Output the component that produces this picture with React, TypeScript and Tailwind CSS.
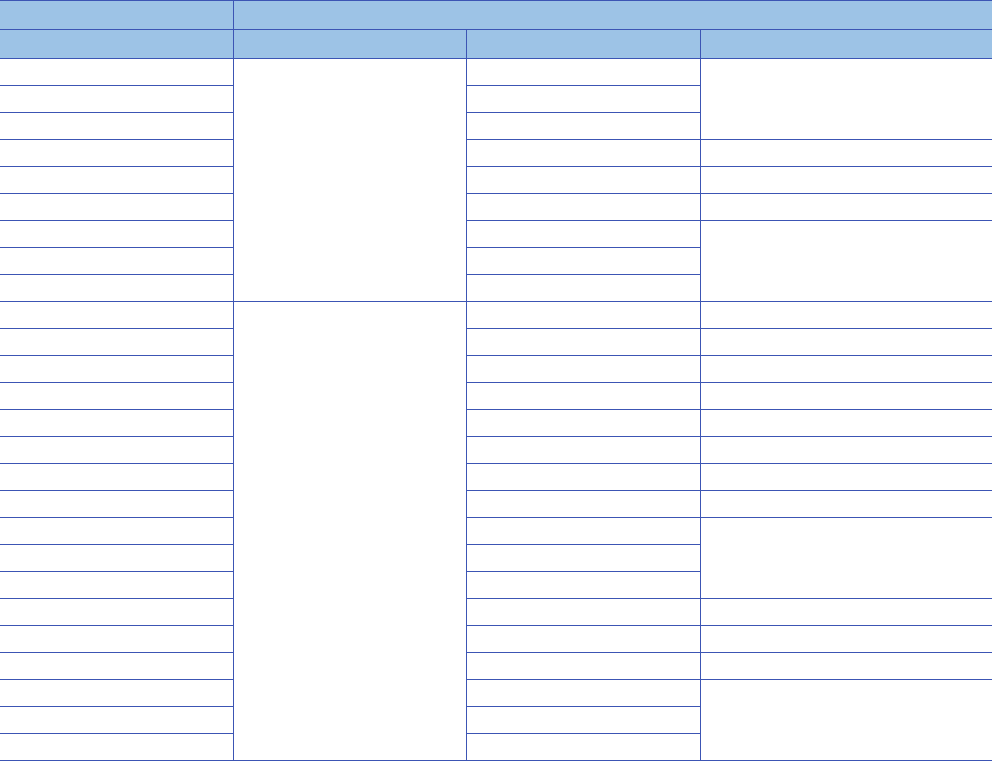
const HEADER_BG = 'bg-[#9dc3e6]';

// row spans in the body: 26 rows of 26px with 1px rule between
const spanHeight: Record<number, string> = {
  1: 'h-[26px]',
  3: 'h-[80px]',
  9: 'h-[242px]',
  17: 'h-[458px]',
};

const ones = (n: number) => Array.from({ length: n }, () => 1);

const columns: { width: string; spans: number[] }[] = [
  { width: 'w-[233px]', spans: ones(26) },
  { width: 'w-[232px]', spans: [9, 17] },
  { width: 'w-[233px]', spans: ones(26) },
  { width: 'flex-1', spans: [3, 1, 1, 1, 3, ...ones(8), 3, 1, 1, 1, 3] },
];

export default function App() {
  return (
    <div className="w-[992px] h-[761px] bg-white">
      <div className="flex flex-col gap-px bg-[#3c55b4] py-px">
        <div className="flex h-[28px] gap-px">
          <div className={`w-[233px] ${HEADER_BG}`} />
          <div className={`flex-1 ${HEADER_BG}`} />
        </div>
        <div className="flex h-[28px] gap-px">
          {columns.map((col, i) => (
            <div key={i} className={`${col.width} ${HEADER_BG}`} />
          ))}
        </div>
        <div className="flex gap-px">
          {columns.map((col, i) => (
            <div key={i} className={`${col.width} flex flex-col gap-px`}>
              {col.spans.map((s, j) => (
                <div key={j} className={`${spanHeight[s]} bg-white`} />
              ))}
            </div>
          ))}
        </div>
      </div>
    </div>
  );
}
